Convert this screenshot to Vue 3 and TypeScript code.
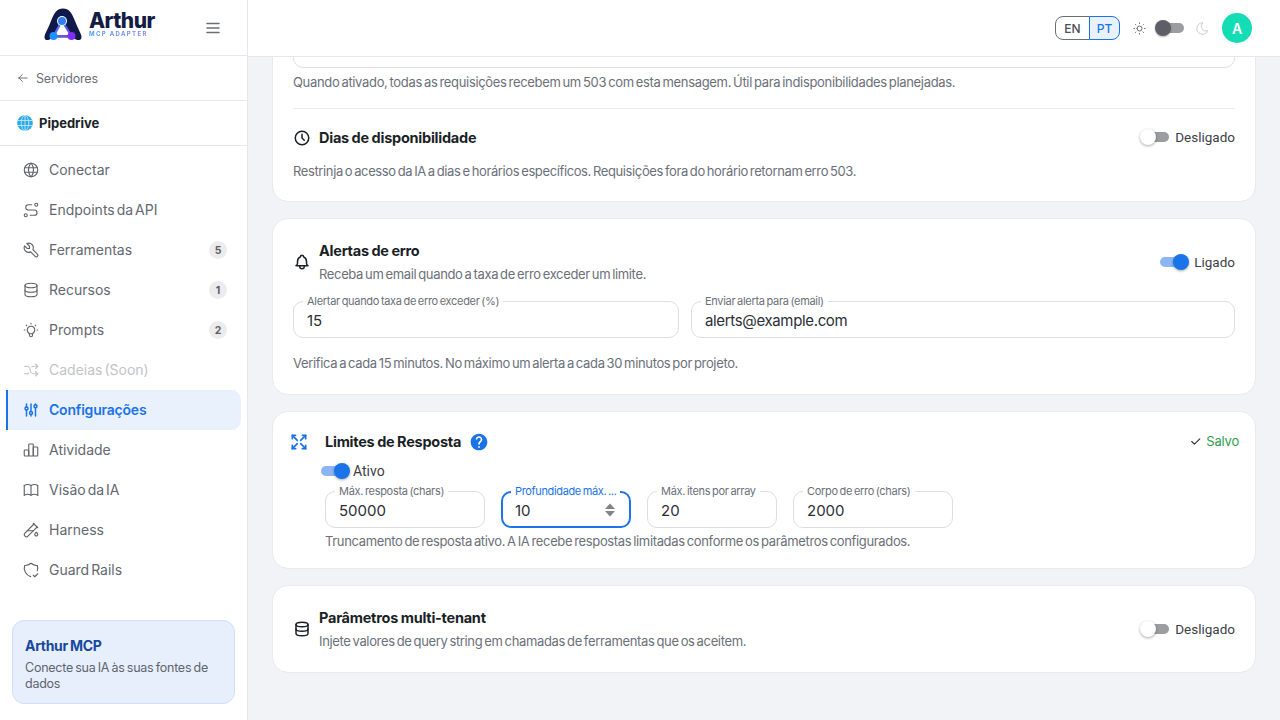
<script setup lang="ts">
interface NavItem {
  label: string;
  paths: string[];
  badge?: number;
  active?: boolean;
  disabled?: boolean;
}

const navItems: NavItem[] = [
  {
    label: 'Conectar',
    paths: ['M3 12a9 9 0 1 0 18 0a9 9 0 0 0 -18 0', 'M3.6 9h16.8', 'M3.6 15h16.8', 'M11.5 3a17 17 0 0 0 0 18', 'M12.5 3a17 17 0 0 1 0 18']
  },
  {
    label: 'Endpoints da API',
    paths: ['M3 19a2 2 0 1 0 4 0a2 2 0 0 0 -4 0', 'M19 7a2 2 0 1 0 0 -4a2 2 0 0 0 0 4z', 'M11 19h5.5a3.5 3.5 0 0 0 0 -7h-8a3.5 3.5 0 0 1 0 -7h4.5']
  },
  {
    label: 'Ferramentas',
    badge: 5,
    paths: ['M7 10h3v-3l-3.5 -3.5a6 6 0 0 1 8 8l6 6a2 2 0 0 1 -3 3l-6 -6a6 6 0 0 1 -8 -8l3.5 3.5']
  },
  {
    label: 'Recursos',
    badge: 1,
    paths: ['M4 6a8 3 0 1 0 16 0a8 3 0 1 0 -16 0', 'M4 6v6a8 3 0 0 0 16 0v-6', 'M4 12v6a8 3 0 0 0 16 0v-6']
  },
  {
    label: 'Prompts',
    badge: 2,
    paths: ['M3 12h1m8 -9v1m8 8h1m-15.4 -6.4l.7 .7m12.1 -.7l-.7 .7', 'M9 16a5 5 0 1 1 6 0a3.5 3.5 0 0 0 -1 3a2 2 0 0 1 -4 0a3.5 3.5 0 0 0 -1 -3', 'M9.7 17l4.6 0']
  },
  {
    label: 'Cadeias (Soon)',
    disabled: true,
    paths: ['M18 4l3 3l-3 3', 'M18 20l3 -3l-3 -3', 'M3 7h3a5 5 0 0 1 5 5a5 5 0 0 0 5 5h5', 'M21 7h-5a4.98 4.98 0 0 0 -3 1m-4 8a4.98 4.98 0 0 1 -3 1h-3']
  },
  {
    label: 'Configurações',
    active: true,
    paths: ['M4 10a2 2 0 1 0 4 0a2 2 0 0 0 -4 0', 'M6 4v4', 'M6 12v8', 'M10 16a2 2 0 1 0 4 0a2 2 0 0 0 -4 0', 'M12 4v10', 'M12 18v2', 'M16 7a2 2 0 1 0 4 0a2 2 0 0 0 -4 0', 'M18 4v1', 'M18 9v11']
  },
  {
    label: 'Atividade',
    paths: ['M3 13a1 1 0 0 1 1 -1h4a1 1 0 0 1 1 1v6a1 1 0 0 1 -1 1h-4a1 1 0 0 1 -1 -1z', 'M15 9a1 1 0 0 1 1 -1h4a1 1 0 0 1 1 1v10a1 1 0 0 1 -1 1h-4a1 1 0 0 1 -1 -1z', 'M9 5a1 1 0 0 1 1 -1h4a1 1 0 0 1 1 1v14a1 1 0 0 1 -1 1h-4a1 1 0 0 1 -1 -1z']
  },
  {
    label: 'Visão da IA',
    paths: ['M3 19a9 9 0 0 1 9 0a9 9 0 0 1 9 0', 'M3 6a9 9 0 0 1 9 0a9 9 0 0 1 9 0', 'M3 6l0 13', 'M12 6l0 13', 'M21 6l0 13']
  },
  {
    label: 'Harness',
    paths: ['M20 8.04l-12.122 12.124a2.857 2.857 0 1 1 -4.041 -4.04l12.122 -12.124', 'M7 13h8', 'M19 15l1.5 1.6a2 2 0 1 1 -3 0l1.5 -1.6z', 'M15 3l6 6']
  },
  {
    label: 'Guard Rails',
    paths: ['M11.46 20.846a12 12 0 0 1 -7.96 -14.846a12 12 0 0 0 8.5 -3a12 12 0 0 0 8.5 3a12 12 0 0 1 -.09 7.06', 'M15 19l2 2l4 -4']
  }
];

const limitFields = [
  { label: 'Máx. resposta (chars)', value: '50000', wide: true },
  { label: 'Profundidade máx. ...', value: '10', focused: true },
  { label: 'Máx. itens por array', value: '20' },
  { label: 'Corpo de erro (chars)', value: '2000', wide: true }
];

const dbPaths = navItems[3].paths;
</script>

<template>
  <div class="app">
    <!-- barra lateral -->
    <aside class="sidebar">
      <div class="brand">
        <div class="logo">
          <svg class="logo-mark" viewBox="0 0 38 33" width="38" height="33">
            <defs>
              <linearGradient id="tri" x1="0" y1="0" x2="1" y2="1">
                <stop offset="0" stop-color="#2f8bff" />
                <stop offset="1" stop-color="#7c3aed" />
              </linearGradient>
            </defs>
            <path d="M0.500 29C0.500 26 4 21 7 13C10 5 13 0.500 19 0.500C25 0.500 28 5 31 13C34 21 37.500 26 37.500 29C37.500 32.500 34 32.500 32 31.500C29 30 27 29.500 18.500 29.500C10 29.500 8 30 5.500 31.500C3.500 32.500 0.500 32.500 0.500 29Z" fill="#10194a" />
            <path d="M18 13L9.500 28H27.500Z" fill="#fff" stroke="url(#tri)" stroke-width="2.200" />
            <circle cx="18" cy="13" r="5" fill="#fff" />
            <circle cx="18" cy="13" r="4" fill="#2f80f5" />
            <circle cx="9.500" cy="28" r="4" fill="#1e90ff" />
            <circle cx="27.500" cy="28" r="4" fill="#7c2ff0" />
          </svg>
          <div class="logo-text">
            <span class="logo-name">Arthur</span>
            <span class="logo-sub">MCP ADAPTER</span>
          </div>
        </div>
        <svg class="menu-icon" viewBox="0 0 24 24" width="18" height="18">
          <path d="M4 6l16 0" /><path d="M4 12l16 0" /><path d="M4 18l16 0" />
        </svg>
      </div>

      <div class="back-row">
        <svg class="ico-back" viewBox="0 0 24 24" width="14" height="14">
          <path d="M5 12l14 0" /><path d="M5 12l6 6" /><path d="M5 12l6 -6" />
        </svg>
        <span>Servidores</span>
      </div>

      <div class="server-row">
        <svg class="globe" viewBox="0 0 16 16" width="16" height="16">
          <circle cx="8" cy="8" r="7.800" fill="#29a9e8" />
          <g fill="none" stroke="#bfe6fb" stroke-width="0.900">
            <path d="M0.800 5.500h14.400M0.800 10.500h14.400M8 0.300v15.400" />
            <ellipse cx="8" cy="8" rx="3.800" ry="7.600" />
          </g>
        </svg>
        <span>Pipedrive</span>
      </div>

      <nav class="nav">
        <div
          v-for="item in navItems"
          :key="item.label"
          class="nav-item"
          :class="{ active: item.active, disabled: item.disabled }"
        >
          <svg class="nav-icon" viewBox="0 0 24 24" width="18" height="18">
            <path v-for="d in item.paths" :key="d" :d="d" />
          </svg>
          <span class="nav-label">{{ item.label }}</span>
          <span v-if="item.badge" class="badge">{{ item.badge }}</span>
        </div>
      </nav>

      <div class="promo">
        <div class="promo-title">Arthur MCP</div>
        <div class="promo-text">Conecte sua IA às suas fontes de dados</div>
      </div>
    </aside>

    <div class="main">
      <!-- cabeçalho -->
      <header class="topbar">
        <div class="lang">
          <span class="lang-btn">EN</span>
          <span class="lang-btn on">PT</span>
        </div>
        <svg class="ico-sun" viewBox="0 0 24 24" width="15" height="15">
          <path d="M8 12a4 4 0 1 0 8 0a4 4 0 1 0 -8 0" />
          <path d="M3 12h1m8 -9v1m8 8h1m-9 8v1m-6.400 -15.400l.7 .7m12.100 -.7l-.7 .7m0 11.400l.7 .7m-12.100 -.7l-.7 .7" />
        </svg>
        <span class="theme-switch"><span class="theme-thumb"></span></span>
        <svg class="ico-moon" viewBox="0 0 24 24" width="15" height="15">
          <path d="M12 3c.132 0 .263 0 .393 0a7.500 7.500 0 0 0 7.920 12.446a9 9 0 1 1 -8.313 -12.454z" />
        </svg>
        <span class="avatar">A</span>
      </header>

      <div class="content">
        <!-- cartão cortado pelo scroll -->
        <section class="card card-cut">
          <div class="field field-cut"></div>
          <p class="help help-first">Quando ativado, todas as requisições recebem um 503 com esta mensagem. Útil para indisponibilidades planejadas.</p>
          <div class="divider"></div>
          <div class="row row-days">
            <svg class="head-icon" viewBox="0 0 24 24" width="18" height="18">
              <path d="M3 12a9 9 0 1 0 18 0a9 9 0 0 0 -18 0" /><path d="M12 7v5l3 3" />
            </svg>
            <h3 class="title">Dias de disponibilidade</h3>
            <label class="state state-days">
              <span class="switch"><span class="thumb"></span></span>
              Desligado
            </label>
          </div>
          <p class="help help-days">Restrinja o acesso da IA a dias e horários específicos. Requisições fora do horário retornam erro 503.</p>
        </section>

        <section class="card card-alerts">
          <div class="row">
            <svg class="head-icon head-icon-low" viewBox="0 0 24 24" width="18" height="18">
              <path d="M10 5a2 2 0 1 1 4 0a7 7 0 0 1 4 6v3a4 4 0 0 0 2 3h-16a4 4 0 0 0 2 -3v-3a7 7 0 0 1 4 -6" />
              <path d="M9 17v1a3 3 0 0 0 6 0v-1" />
            </svg>
            <div class="head-text">
              <h3 class="title">Alertas de erro</h3>
              <p class="sub">Receba um email quando a taxa de erro exceder um limite.</p>
            </div>
            <label class="state state-low">
              <span class="switch on"><span class="thumb"></span></span>
              Ligado
            </label>
          </div>
          <div class="alert-fields">
            <div class="field">
              <span class="field-label">Alertar quando taxa de erro exceder (%)</span>
              <span class="field-value">15</span>
            </div>
            <div class="field">
              <span class="field-label">Enviar alerta para (email)</span>
              <span class="field-value field-email">alerts@example.com</span>
            </div>
          </div>
          <p class="help help-alerts">Verifica a cada 15 minutos. No máximo um alerta a cada 30 minutos por projeto.</p>
        </section>

        <section class="card card-limits">
          <div class="limits-head">
            <svg class="expand-icon" viewBox="0 0 24 24" width="20" height="20">
              <path d="M16 4l4 0l0 4" /><path d="M14 10l6 -6" /><path d="M8 20l-4 0l0 -4" /><path d="M4 20l6 -6" />
              <path d="M16 20l4 0l0 -4" /><path d="M14 14l6 6" /><path d="M8 4l-4 0l0 4" /><path d="M4 4l6 6" />
            </svg>
            <h3 class="title">Limites de Resposta</h3>
            <svg class="help-icon" viewBox="0 0 24 24" width="20" height="20">
              <path d="M12 2C6.480 2 2 6.480 2 12s4.480 10 10 10 10-4.480 10-10S17.520 2 12 2zm1 17h-2v-2h2v2zm2.070-7.750l-.9.920C13.450 12.900 13 13.500 13 15h-2v-.5c0-1.100.45-2.100 1.170-2.830l1.240-1.260c.37-.36.59-.86.59-1.410 0-1.100-.9-2-2-2s-2 .9-2 2H8c0-2.210 1.790-4 4-4s4 1.790 4 4c0 .88-.36 1.680-.93 2.250z" />
            </svg>
            <span class="saved">
              <svg viewBox="0 0 24 24" width="13" height="13"><path d="M5 12l5 5l10 -10" /></svg>
              Salvo
            </span>
          </div>
          <div class="limits-body">
            <label class="state state-active">
              <span class="switch on"><span class="thumb"></span></span>
              Ativo
            </label>
            <div class="limit-fields">
              <div
                v-for="f in limitFields"
                :key="f.label"
                class="field"
                :class="{ wide: f.wide, focused: f.focused }"
              >
                <span class="field-label">{{ f.label }}</span>
                <span class="field-value">{{ f.value }}</span>
                <svg v-if="f.focused" class="spin" viewBox="0 0 12 16" width="12" height="16">
                  <path d="M6 1.500L11 7H1Z" /><path d="M6 14.500L1 9H11Z" />
                </svg>
              </div>
            </div>
            <p class="help help-limits">Truncamento de resposta ativo. A IA recebe respostas limitadas conforme os parâmetros configurados.</p>
          </div>
        </section>

        <section class="card card-tenant">
          <div class="row">
            <svg class="head-icon head-icon-low" viewBox="0 0 24 24" width="18" height="18">
              <path v-for="d in dbPaths" :key="d" :d="d" />
            </svg>
            <div class="head-text">
              <h3 class="title">Parâmetros multi-tenant</h3>
              <p class="sub">Injete valores de query string em chamadas de ferramentas que os aceitem.</p>
            </div>
            <label class="state state-low">
              <span class="switch"><span class="thumb"></span></span>
              Desligado
            </label>
          </div>
        </section>
      </div>
    </div>
  </div>
</template>

<style>
html,
body {
  margin: 0;
  overflow: hidden;
}
</style>

<style scoped>
.app {
  display: flex;
  width: 1280px;
  height: 720px;
  overflow: hidden;
  background: #f1f3f6;
  color: #1b1f26;
  font-family: Inter, "Noto Sans", sans-serif;
  font-size: 13px;
}

svg {
  flex-shrink: 0;
  fill: none;
  stroke: currentColor;
  stroke-width: 1.5;
  stroke-linecap: round;
  stroke-linejoin: round;
}

/* 侧栏 */
.sidebar {
  width: 248px;
  flex-shrink: 0;
  box-sizing: border-box;
  display: flex;
  flex-direction: column;
  background: #fff;
  border-right: 1px solid #e6e8ec;
}

.brand {
  height: 56px;
  box-sizing: border-box;
  flex-shrink: 0;
  display: flex;
  align-items: center;
  padding: 0 26px 0 44px;
  border-bottom: 1px solid #e6e8ec;
}

.logo {
  display: flex;
  align-items: center;
  gap: 7px;
  margin-top: -6px;
}

.logo-mark {
  stroke: none;
}

.logo-text {
  display: flex;
  flex-direction: column;
  line-height: 1;
  margin-top: -3px;
}

.logo-name {
  font-size: 21px;
  font-weight: 800;
  color: #141b44;
  letter-spacing: -0.55px;
}

.logo-sub {
  font-size: 6px;
  font-weight: 700;
  letter-spacing: 1.35px;
  margin-top: 0;
  background: linear-gradient(90deg, #3b9bff, #9a7bf5);
  -webkit-background-clip: text;
  background-clip: text;
  color: transparent;
}

.menu-icon {
  margin-left: auto;
  margin-right: -1px;
  color: #6b6f76;
  stroke-width: 2;
}

.back-row {
  height: 45px;
  box-sizing: border-box;
  flex-shrink: 0;
  display: flex;
  align-items: center;
  gap: 6px;
  padding-left: 16px;
  font-size: 12.5px;
  letter-spacing: -0.2px;
  color: #6b7079;
  border-bottom: 1px solid #e6e8ec;
}

.ico-back {
  color: #5f6368;
}

.server-row {
  height: 45px;
  box-sizing: border-box;
  flex-shrink: 0;
  display: flex;
  align-items: center;
  gap: 6px;
  padding-left: 17px;
  font-size: 13px;
  font-weight: 700;
  color: #1b1f26;
  border-bottom: 1px solid #e6e8ec;
}

.globe {
  stroke: none;
}

.nav {
  padding: 4px 6px 0;
  display: flex;
  flex-direction: column;
}

.nav-item {
  height: 40px;
  display: flex;
  align-items: center;
  padding: 0 14px 0 15.5px;
  font-size: 14px;
  word-spacing: -2px;
  color: #636871;
  border-radius: 0 10px 10px 0;
}

.nav-icon {
  margin-right: 9.5px;
  color: #5f6368;
}

.nav-label {
  flex: 1;
  padding-bottom: 1px;
}

.nav-item.active {
  background: #e9f1fd;
  color: #1a73e8;
  font-weight: 600;
  letter-spacing: -0.2px;
  box-shadow: inset 2px 0 0 #1a73e8;
}

.nav-item.active .nav-icon {
  color: #1a73e8;
  stroke-width: 2;
}

.nav-item.disabled,
.nav-item.disabled .nav-icon {
  color: #c2c4c8;
}

.badge {
  width: 18px;
  height: 18px;
  border-radius: 50%;
  background: #ececee;
  color: #5b5f66;
  font-size: 10.5px;
  font-weight: 700;
  display: flex;
  align-items: center;
  justify-content: center;
}

.promo {
  margin: auto 12px 16px;
  height: 84px;
  box-sizing: border-box;
  padding: 16px 12px 0;
  background: #e8effc;
  border: 1px solid #cfdff9;
  border-radius: 12px;
}

.promo-title {
  font-size: 14px;
  font-weight: 700;
  letter-spacing: -0.3px;
  word-spacing: -1px;
  color: #17489c;
  line-height: 18px;
}

.promo-text {
  font-size: 12.5px;
  letter-spacing: -0.25px;
  word-spacing: -1px;
  line-height: 16px;
  color: #5d6470;
  margin-top: 5px;
}

/* 主区域 */
.main {
  flex: 1;
  min-width: 0;
  display: flex;
  flex-direction: column;
  overflow: hidden;
}

.topbar {
  position: relative;
  z-index: 2;
  height: 57px;
  box-sizing: border-box;
  flex-shrink: 0;
  display: flex;
  align-items: center;
  justify-content: flex-end;
  padding-right: 28px;
  background: #fff;
  border-bottom: 1px solid #e6e8ec;
}

.lang {
  display: flex;
  margin-right: 12px;
}

.lang-btn {
  height: 24px;
  box-sizing: border-box;
  display: flex;
  align-items: center;
  justify-content: center;
  width: 35px;
  font-size: 12px;
  font-weight: 500;
  color: #4b5057;
  border: 1px solid #6b7078;
  border-radius: 8px 0 0 8px;
}

.lang-btn.on {
  width: 31px;
  color: #1a73e8;
  background: #e9f1fd;
  border-color: #1a73e8;
  border-radius: 0 8px 8px 0;
  margin-left: -1px;
}

.ico-sun {
  color: #5f6368;
}

.theme-switch {
  position: relative;
  width: 28px;
  height: 10px;
  margin: 0 11px 0 9px;
  border-radius: 5px;
  background: #9b9da1;
}

.theme-thumb {
  position: absolute;
  left: -1px;
  top: -3px;
  width: 16px;
  height: 16px;
  border-radius: 50%;
  background: #5c6066;
  box-shadow: 0 1px 2px rgba(0, 0, 0, 0.3);
}

.ico-moon {
  color: #c9cbce;
}

.avatar {
  width: 30px;
  height: 30px;
  margin-left: 12px;
  border-radius: 50%;
  background: #14dcb4;
  color: #fff;
  font-size: 14px;
  font-weight: 600;
  display: flex;
  align-items: center;
  justify-content: center;
}

.content {
  flex: 1;
  min-height: 0;
  padding: 0 24px;
  display: flex;
  flex-direction: column;
  gap: 16px;
}

.card {
  box-sizing: border-box;
  background: #fff;
  border: 1px solid #e8eaee;
  border-radius: 16px;
  padding: 0 20px;
  flex-shrink: 0;
}

.card-cut {
  margin-top: -30px;
  height: 175px;
}

.field {
  position: relative;
  box-sizing: border-box;
  height: 37px;
  display: flex;
  align-items: center;
  padding: 1px 13px 0;
  border: 1px solid #dcdee2;
  border-radius: 10px;
  background: #fff;
}

.field-cut {
  height: 40px;
}

.field-label {
  position: absolute;
  left: 9px;
  top: -8px;
  padding: 0 4px;
  background: #fff;
  font-size: 11px;
  letter-spacing: -0.3px;
  word-spacing: -1px;
  line-height: 14px;
  color: #6b7079;
  white-space: nowrap;
}

.field-value {
  font-size: 15px;
  color: #2b2f36;
}

.field-email {
  letter-spacing: -0.35px;
}

.field.focused {
  border: 2px solid #1a73e8;
  padding: 1px 12px 0;
}

.field.focused .field-label {
  left: 8px;
  top: -9px;
  letter-spacing: -0.35px;
  color: #1a73e8;
}

.spin {
  margin-left: auto;
  margin-right: 1px;
  fill: #808388;
  stroke: none;
}

.help,
.sub {
  margin: 0;
  font-size: 13px;
  line-height: 18px;
  letter-spacing: -0.35px;
  word-spacing: -1.3px;
  color: #6b7079;
}

.help-first {
  margin-top: 5px;
  letter-spacing: -0.33px;
}

.divider {
  height: 1px;
  margin-top: 17px;
  background: #e8eaee;
}

.row {
  display: flex;
  align-items: center;
}

.row-days {
  margin-top: 17px;
}

.head-icon {
  margin-right: 8px;
  stroke-width: 2;
}

.head-icon-low {
  margin-top: 2px;
}

.title {
  margin: 0;
  font-size: 14.5px;
  line-height: 24px;
  font-weight: 700;
  letter-spacing: -0.25px;
  word-spacing: -0.5px;
  color: #1b1f26;
}

.head-text {
  flex: 1;
}

.sub {
  margin-top: 2px;
}

.state {
  margin-left: auto;
  display: flex;
  align-items: center;
  gap: 6px;
  font-family: Roboto, Inter, sans-serif;
  font-size: 13.5px;
  color: #3b3f46;
}

.state-days {
  margin-top: -3px;
}

.state-low {
  margin-top: 2px;
}

.switch {
  position: relative;
  width: 28px;
  height: 10px;
  border-radius: 5px;
  background: #9b9da1;
}

.thumb {
  position: absolute;
  left: -1px;
  top: -3px;
  width: 16px;
  height: 16px;
  border-radius: 50%;
  background: #fff;
  box-shadow: 0 1px 3px rgba(0, 0, 0, 0.35);
}

.switch.on {
  background: #8ab6f4;
}

.switch.on .thumb {
  left: 13px;
  background: #1a73e8;
}

.help-days {
  margin-top: 12px;
  letter-spacing: -0.38px;
}

.card-alerts {
  height: 177px;
  padding-top: 20px;
}

.alert-fields {
  display: grid;
  grid-template-columns: 386px 1fr;
  gap: 12px;
  margin-top: 18px;
}

.help-alerts {
  margin-top: 16px;
}

.card-limits {
  height: 158px;
  padding: 18px 16px 0 18px;
}

.limits-head {
  display: flex;
  align-items: center;
}

.expand-icon {
  color: #1a73e8;
  margin-left: -2px;
  margin-right: 16px;
  stroke-width: 2;
}

.help-icon {
  margin-left: 8px;
  fill: #1a73e8;
  stroke: none;
}

.saved {
  margin-left: auto;
  display: flex;
  align-items: center;
  gap: 4px;
  font-size: 13px;
  letter-spacing: -0.2px;
  color: #2e9e4f;
  margin-top: -2px;
}

.saved svg {
  color: #2b3036;
  stroke-width: 2;
}

.limits-body {
  padding-left: 34px;
}

.state-active {
  justify-content: flex-start;
  font-size: 14px;
  height: 22px;
  gap: 4px;
  margin-left: -4px;
  margin-top: 6px;
}

.limit-fields {
  display: flex;
  gap: 16px;
  margin-top: 9px;
}

.limit-fields .field {
  width: 130px;
}

.limit-fields .field.wide {
  width: 160px;
}

.help-limits {
  margin-top: 4px;
}

.card-tenant {
  height: 88px;
  padding-top: 20px;
}
</style>
